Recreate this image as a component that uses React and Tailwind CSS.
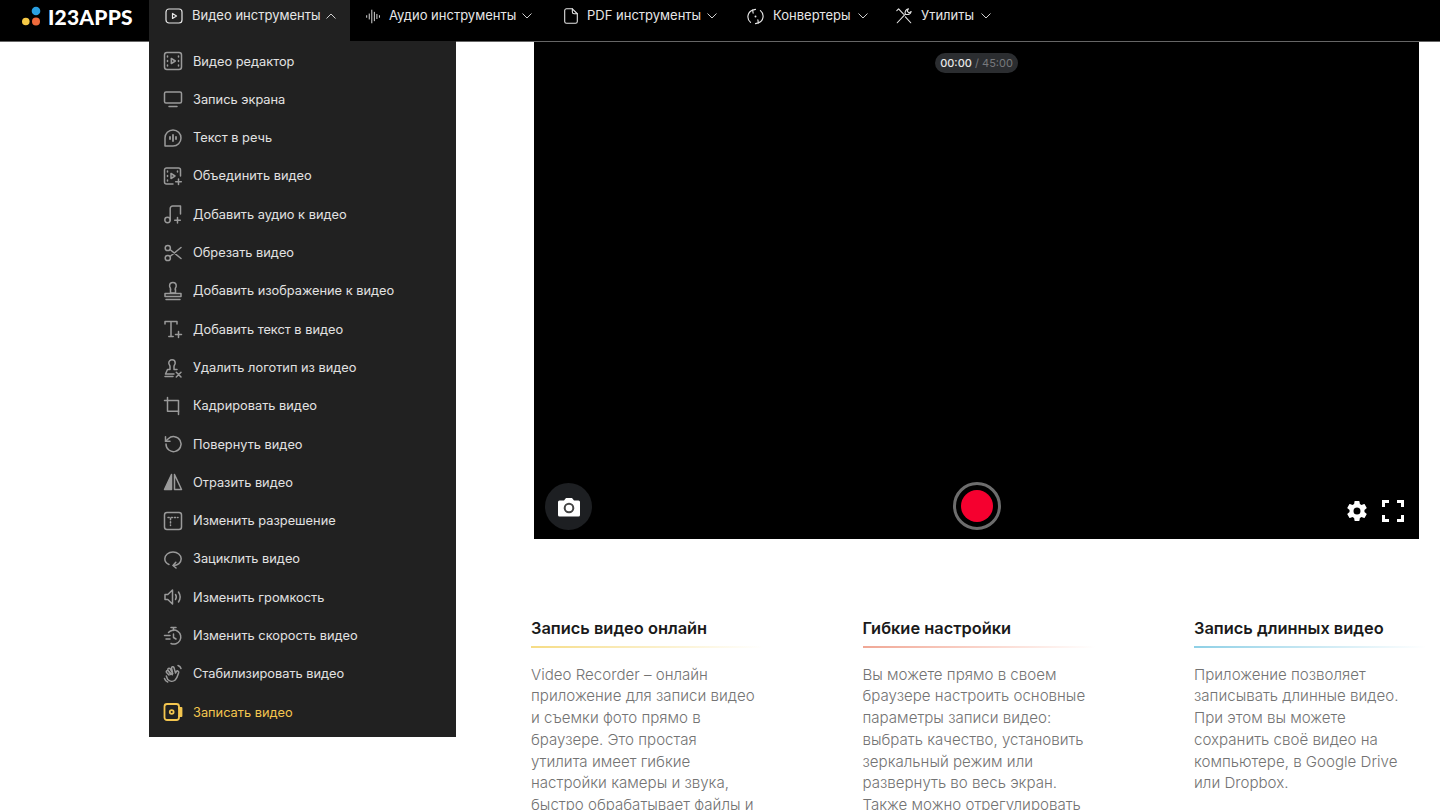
import React from "react";

const S = ({ children, size = 20, sw = 1.5, className = "" }) => (
  <svg width={size} height={size} viewBox="0 0 20 20" fill="none" stroke="currentColor" strokeWidth={sw} strokeLinecap="round" strokeLinejoin="round" className={className}>
    {children}
  </svg>
);

const Chevron = ({ up }) => (
  <svg width="10" height="6" viewBox="0 0 10 6" fill="none" stroke="currentColor" strokeWidth="1" className={up ? "ml-[5px] text-[#cfcfcf]" : "-ml-px text-[#cfcfcf]"}>
    <path d={up ? "M0.5 5.5L5 1l4.5 4.5" : "M0.5 0.5L5 5l4.5-4.5"} />
  </svg>
);

const icons = [
  <S><rect x="1.500" y="1.500" width="17" height="17" rx="2.500" /><path d="M8.300 7.500v5l4-2.500z" /><path d="M4.500 5v1M4.500 9.500v1M4.500 14v1M15.500 5v1M15.500 9.500v1M15.500 14v1" /></S>,
  <S><rect x="1.500" y="3" width="17" height="11" rx="1.500" /><path d="M6 17.500h8" /></S>,
  <S><path d="M2 18V10a8 8 0 1 1 8 8z" /><path d="M7 9v2M10 7v6M13 9v2" strokeWidth="1.800" /></S>,
  <S><path d="M10 18H3.500a2 2 0 0 1-2-2V4a2 2 0 0 1 2-2h12a2 2 0 0 1 2 2v6" /><path d="M8 7.500v5l4-2.500z" /><path d="M4.500 5v1M4.500 9.500v1M4.500 14v1M14.500 5v1" /><path d="M15.500 13v5.500M12.700 15.800h5.600" /></S>,
  <S><circle cx="4.500" cy="16" r="2.700" /><path d="M7.200 16V4.500a2.500 2.500 0 0 1 2.500-2.500h7.800v8" /><path d="M14.500 13.500v5.500M11.700 16.200h5.600" /></S>,
  <S><circle cx="4.800" cy="5" r="2.600" /><circle cx="4.800" cy="15" r="2.600" /><path d="M7 6.500L18 15.500M7 13.500L18 4.500" /></S>,
  <S><path d="M7.500 8.500c.4-1.300-.9-2-.9-3.600a3.300 3.300 0 0 1 6.600 0c0 1.600-1.300 2.300-.9 3.600" /><path d="M7.500 8.500v3.500h5V8.500" /><path d="M2 12.500h16v3H2zM3 18.500h14" /></S>,
  <S><path d="M2 5V2.500h12V5M8 2.500v15M5.800 17.500h4.400" /><path d="M15.500 12.500v6M12.500 15.500h6" /></S>,
  <S><path d="M9 1.800a3.200 3.200 0 0 1 3.200 3.200c0 1.500-1.200 2.300-1.200 3.500v3H14M9 1.800A3.200 3.200 0 0 0 5.800 5c0 1.500 1.200 2.300 1.200 3.500v3H4.500L2.500 16h8.500M2 18.500h8" /><path d="M13.300 14.300l4.700 4.700M18 14.300l-4.700 4.700" /></S>,
  <S><path d="M1.500 4.500h3M4.500 1.500v13.800h11.300M4.500 4.500h11v10.800M15.500 15.300v3.200" /></S>,
  <S><path d="M3 10a7.500 7.500 0 1 0 2.300-5.300L2.500 7.300" /><path d="M2.500 2.800v4.500H7" /></S>,
  <S><path d="M8.500 2.500v15H1.500z" fill="currentColor" /><path d="M11.500 2.500v15h7z" /></S>,
  <S><rect x="1.500" y="1.500" width="17" height="17" rx="2.500" /><path d="M5 6.500h10M7.500 7.500v7" strokeDasharray="1.200 2" /></S>,
  <S><path d="M6 15.500C3.500 14.500 1.800 12.300 1.800 9.800 1.800 6 5.500 3 10 3s8.200 3 8.200 6.800-3.400 6.700-7.800 6.700" /><path d="M12.800 13.200l-2.800 3.300 3 2.500" /></S>,
  <S><path d="M2 7.500v5h2.800L9.500 17V3L4.800 7.500z" /><path d="M12.500 7.500c1 1.500 1 3.500 0 5M15.500 5c2 3 2 7 0 10" /></S>,
  <S><path d="M8 1.500h5M10.500 1.500v3" /><path d="M5.500 6.500A7 7 0 1 1 8 17.500" /><path d="M10.500 8v3.500l2.500 1.500M1.500 9.500h5.500M3 13h4" /></S>,
  <S><path d="M6 11L3.500 8.500a1.300 1.300 0 0 1 1.800-1.800l4 4M7.500 10.500L4.800 5.800a1.300 1.300 0 0 1 2.200-1.200L9.800 9.500M9.500 8.500l-1-4.300a1.300 1.300 0 0 1 2.500-.6l1.500 5.400 1-1.700a1.300 1.300 0 0 1 2.200 1.200c-.9 2.500-1.300 5.500-3.500 7.500-2.300 2-5.500 1.500-7.500-.5L3.300 12" /><path d="M15 1.500c1.500.4 2.600 1.500 3 3M1.500 14.500c.5 1.700 1.700 3 3.200 3.500" /></S>,
  <S sw={1.800}><rect x="1.500" y="2" width="14.500" height="16" rx="2.500" /><circle cx="8.700" cy="10" r="2.800" fill="currentColor" stroke="none" /><circle cx="8.700" cy="10" r="1.100" fill="#212121" stroke="none" /><path d="M16 6h2.500v8H16" fill="currentColor" /></S>,
];

const items = ["Видео редактор","Запись экрана","Текст в речь","Объединить видео","Добавить аудио к видео","Обрезать видео","Добавить изображение к видео","Добавить текст в видео","Удалить логотип из видео","Кадрировать видео","Повернуть видео","Отразить видео","Изменить разрешение","Зациклить видео","Изменить громкость","Изменить скорость видео","Стабилизировать видео","Записать видео"];

const columns = [
  { x: "w-[331.500px]", title: "Запись видео онлайн", grad: "from-[#f6dc84]", lines: ["Video Recorder – онлайн","приложение для записи видео","и съемки фото прямо в","браузере. Это простая","утилита имеет гибкие","настройки камеры и звука,","быстро обрабатывает файлы и"] },
  { x: "w-[331.500px]", title: "Гибкие настройки", grad: "from-[#f0a795]", lines: ["Вы можете прямо в своем","браузере настроить основные","параметры записи видео:","выбрать качество, установить","зеркальный режим или","развернуть во весь экран.","Также можно отрегулировать"] },
  { x: "w-[246px]", title: "Запись длинных видео", grad: "from-[#8ed0e6]", lines: ["Приложение позволяет","записывать длинные видео.","При этом вы можете","сохранить своё видео на","компьютере, в Google Drive","или Dropbox."] },
];

const navItems = [
  { w: "w-[197px]", label: "Аудио инструменты", icon: <S size={17} sw={1.100}><path d="M2 9v2M5 7v6M8 2.500v15M11 5v10M14 7.500v5M17 9v2" /></S>, gap: "gap-[7px]" },
  { w: "w-[184px]", label: "PDF инструменты", icon: <S size={18} sw={1.200}><path d="M11.500 2H5a2 2 0 0 0-2 2v12a2 2 0 0 0 2 2h10a2 2 0 0 0 2-2V7.500z" /><path d="M11.500 2v3.500a2 2 0 0 0 2 2H17" /></S>, gap: "gap-[7px]" },
  { w: "w-[149px]", label: "Конвертеры", icon: <S size={19} sw={1.200}><path d="M7 3.300A7.500 7.500 0 0 0 4.800 16.200M13 16.700A7.500 7.500 0 0 0 15.200 3.800" /><path d="M7.500 6.500L7 3.300l3-.8M12.500 13.500l.5 3.200-3 .8" /><circle cx="10" cy="10" r="1" fill="currentColor" stroke="none" /></S>, gap: "gap-[8px]" },
  { w: "", label: "Утилиты", icon: <S size={18} sw={1.200}><path d="M2.500 17.500l9-9.500" /><path d="M11.500 8c-1-2.500.5-5.500 3.500-6l-1.500 2.500 2 2L18 5c-.5 3-3.500 4-6.500 3z" /><path d="M2 4l2-2 5.500 6M11.500 11l6 6.500" /></S>, gap: "gap-[8px]" },
];

export default function App() {
  return (
    <div className="relative h-[810px] w-[1440px] overflow-hidden bg-white font-['Inter',sans-serif]">
      <header className="flex h-[42px] items-stretch border-b border-[#666] bg-black text-[13px] text-[#e6e6e6]">
        <div className="flex w-[149px] items-center pb-[9px] pl-[22px]">
          <svg width="20" height="20" viewBox="0 0 20 20" className="mr-[6px] shrink-0">
            <circle cx="14" cy="5" r="4.300" fill="#2a9fe0" />
            <circle cx="3.800" cy="15.500" r="3.800" fill="#f6c945" />
            <circle cx="14" cy="15.500" r="4" fill="#ee6a3c" />
          </svg>
          <span className="font-['Lato',sans-serif] text-[21px] font-black leading-none tracking-[0.2px] text-white">I23APPS</span>
        </div>
        <div className="flex h-[41px] w-[201px] items-center bg-[#212121] pb-[9px] pl-[15px]">
          <S size={20} sw={1.200} className="mr-[8px]"><rect x="2" y="3" width="16" height="14" rx="3" /><path d="M8.500 7.500v5l4-2.500z" /></S>
          <span>Видео инструменты</span>
          <Chevron up />
        </div>
        <div className="flex items-center pb-[9px] pl-[15px]">
          {navItems.map((n) => (
            <div key={n.label} className={`flex items-center ${n.gap} ${n.w}`}>
              {n.icon}
              <span>{n.label}</span>
              <Chevron />
            </div>
          ))}
        </div>
      </header>

      <nav className="absolute left-[149px] top-[41px] w-[307px] bg-[#212121] pb-[6px] pl-[14px] pt-px text-[12.800px] text-[#e2e2e2]">
        {items.map((t, i) => (
          <div key={t} className={`flex h-[38.300px] items-center gap-[10px] ${i === 17 ? "text-[#f4c64f]" : ""}`}>
            <span className={i === 17 ? "text-[#f4c64f]" : "text-[#9a9a9a]"}>{icons[i]}</span>
            <span>{t}</span>
          </div>
        ))}
      </nav>

      <main className="pl-[531px]">
        <section className="relative ml-[3px] h-[497px] w-[885px] bg-black">
          <div className="absolute left-[401px] top-[11px] flex h-[20px] w-[83px] items-center justify-center rounded-full bg-[#2b2d30] text-[11px] text-[#77797c]">
            <span className="font-medium text-[#e8e8e8]">00:00</span>
            <span>&nbsp;/ 45:00</span>
          </div>
          <div className="absolute bottom-[9px] left-[11px] flex h-[47px] w-[47px] items-center justify-center rounded-full bg-[#1d1f22]">
            <svg width="24" height="20" viewBox="0 0 24 20">
              <path d="M1 5a1.500 1.500 0 0 1 1.500-1.500H7L9 1h6l2 2.500h4.500A1.500 1.500 0 0 1 23 5v13a1.500 1.500 0 0 1-1.500 1.500h-19A1.500 1.500 0 0 1 1 18z" fill="#fff" />
              <circle cx="12" cy="11" r="4.300" fill="none" stroke="#444" strokeWidth="2" />
            </svg>
          </div>
          <div className="absolute bottom-[9px] left-[419px] flex h-[48px] w-[48px] items-center justify-center rounded-full border-[3px] border-[#6d6d6d]">
            <div className="h-[32px] w-[32px] rounded-full bg-[#f5002f]" />
          </div>
          <div className="absolute bottom-[16px] right-[15px] flex items-center gap-[13px]">
            <svg width="24" height="24" viewBox="0 0 24 24" fill="#fff"><path d="M19.430 12.980c.040-.320.070-.640.070-.980s-.030-.660-.070-.980l2.110-1.650c.190-.150.240-.420.120-.640l-2-3.460c-.120-.220-.390-.300-.610-.220l-2.490 1c-.520-.400-1.080-.730-1.690-.980l-.380-2.650A.488.488 0 0 0 14 2h-4c-.250 0-.460.180-.490.420l-.380 2.650c-.610.250-1.170.590-1.690.980l-2.490-1a.566.566 0 0 0-.180-.030c-.170 0-.340.090-.430.250l-2 3.460c-.130.220-.070.490.120.640l2.110 1.650c-.040.320-.070.650-.070.980s.030.660.070.980l-2.110 1.650c-.190.150-.240.420-.120.640l2 3.460c.120.220.390.300.610.220l2.490-1c.520.400 1.080.730 1.690.980l.380 2.650c.030.240.240.420.490.420h4c.250 0 .460-.180.490-.420l.380-2.650c.610-.250 1.170-.590 1.690-.980l2.490 1c.060.020.120.030.180.030.170 0 .340-.090.430-.250l2-3.460c.120-.220.070-.490-.120-.640l-2.110-1.650zM12 15.500a3.500 3.500 0 1 1 0-7 3.500 3.500 0 0 1 0 7z" /></svg>
            <svg width="22" height="22" viewBox="0 0 22 22" fill="none" stroke="#fff" strokeWidth="3"><path d="M1.500 7V1.500H7M15 1.500h5.500V7M20.500 15v5.500H15M7 20.500H1.500V15" /></svg>
          </div>
        </section>

        <section className="mt-[78px] flex">
          {columns.map((c) => (
            <article key={c.title} className={c.x}>
              <h3 className="text-[16.400px] font-semibold leading-[22px] text-[#1a1a1a]">{c.title}</h3>
              <div className={`mt-[7px] h-[2px] w-[232px] bg-gradient-to-r ${c.grad} to-white`} />
              <div className="mt-[15.500px] whitespace-nowrap text-[15.100px] font-light leading-[21.800px] text-[#737373]">
                {c.lines.map((l) => <p key={l}>{l}</p>)}
              </div>
            </article>
          ))}
        </section>
      </main>
    </div>
  );
}
